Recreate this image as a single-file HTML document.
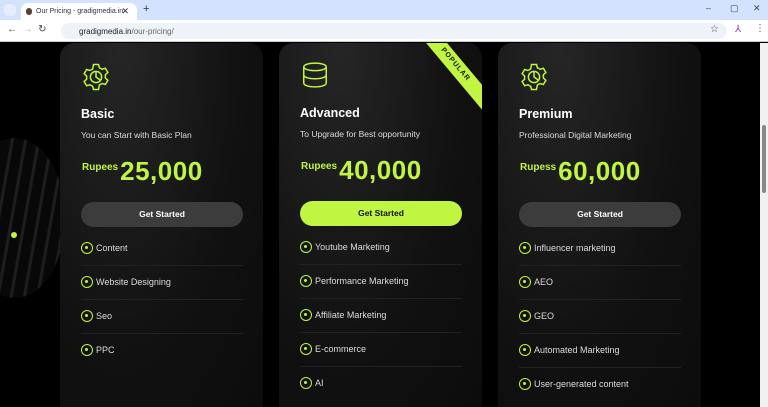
<!DOCTYPE html>
<html style="overflow:hidden;height:407px"><head><style>
*{margin:0;padding:0;box-sizing:border-box}
body{width:768px;height:407px;overflow:hidden;background:#000;font-family:"Liberation Sans",sans-serif;position:relative}
.tabbar{position:absolute;left:0;top:0;width:768px;height:20px;background:#d3e3fd}
.tab{position:absolute;left:21px;top:3px;width:116px;height:17px;background:#fff;border-radius:7px 7px 0 0;font-size:7px;color:#333;padding:5px 0 0 15px;white-space:nowrap}
.addr{position:absolute;left:0;top:20px;width:768px;height:22px;background:#fff;border-bottom:1px solid #ccc}
.url{position:absolute;left:61px;top:3px;width:666px;height:16px;background:#eef2f9;border-radius:8px;font-size:8px;color:#222;padding:4px 0 0 18px}
.card{position:absolute;top:43px;width:203px;height:364px;border-radius:14px 14px 0 0;background:radial-gradient(ellipse at 30% 0%,#262626,#111 60%,#0c0c0c);overflow:hidden}
.ic{position:absolute;left:21px;top:19px}
h3{position:absolute;left:21px;top:64px;color:#fff;font-size:12.5px;font-weight:bold}
.sub{position:absolute;left:21px;top:87px;color:#ddd;font-size:8.5px}
.price{position:absolute;left:22px;top:113px;color:#c0f542;font-weight:bold;white-space:nowrap}
.price small{font-size:10px;vertical-align:10px;margin-right:2px}
.price span{font-size:26px;letter-spacing:0.5px}
.btn{position:absolute;left:21px;top:159px;width:162px;height:25px;border-radius:13px;background:#3c3c3c;color:#fff;font-size:8.5px;font-weight:bold;text-align:center;line-height:25px}
.green{background:#c0f542;color:#111}
ul{position:absolute;left:21px;top:189px;width:162px;list-style:none}
li{height:34px;border-bottom:1px solid #222;color:#ddd;font-size:9px;padding-top:11px;position:relative;padding-left:15px}
li:before{content:"";position:absolute;left:0;top:10px;width:10px;height:10px;border:1.5px solid #c0f542;border-radius:50%}
li:after{content:"";position:absolute;left:3.5px;top:13.5px;width:3px;height:3px;background:#c0f542;border-radius:50%}
.rib{position:absolute;right:-28px;top:14px;width:110px;height:16px;background:#c0f542;transform:rotate(50deg);color:#111;font-size:7px;font-weight:bold;text-align:center;line-height:16px;letter-spacing:1px}
.wc{position:absolute;top:3px;font-size:9px;color:#444}
</style></head><body>
<div class="tabbar"><div style="position:absolute;left:4px;top:4px;width:12px;height:12px;background:#e6eefb;border-radius:4px"></div>
<div class="tab"><span style="position:absolute;left:5px;top:5px;width:6px;height:7px;background:#5a4030;border-radius:3px"></span>Our Pricing - gradigmedia.in<span style="position:absolute;right:8px;top:3px;font-size:9px">✕</span></div>
<div style="position:absolute;left:143px;top:3px;font-size:11px;color:#333">+</div>
<span class="wc" style="left:706px">–</span><span class="wc" style="left:730px">▢</span><span class="wc" style="left:753px">✕</span></div>
<div class="addr"><div style="position:absolute;left:7px;top:4px;font-size:10px;color:#444;white-space:nowrap">←&nbsp;&nbsp;<span style="color:#bbb">→</span>&nbsp;&nbsp;↻</div>
<div class="url">gradigmedia.in<span style="color:#666">/our-pricing/</span></div>
<div style="position:absolute;left:710px;top:4px;font-size:10px;color:#444">☆</div>
<div style="position:absolute;left:735px;top:4px;font-size:10px;color:#8a3fc0">⅄</div>
<div style="position:absolute;left:755px;top:3px;font-size:10px;color:#444">⋮</div></div>
<div style="position:absolute;left:760px;top:43px;width:8px;height:364px;background:#f1f1f1"><div style="position:absolute;left:2px;top:82px;width:4px;height:68px;background:#888;border-radius:2px"></div></div>
<div style="position:absolute;left:-35px;top:138px;width:100px;height:160px;border-radius:50%;background:repeating-linear-gradient(100deg,#080808 0 6px,#1e1e1e 7px 9px,#080808 10px 13px)"></div>
<div style="position:absolute;left:11px;top:232px;width:6px;height:6px;border-radius:50%;background:#c0f542"></div>

<div class="card" style="left:60px">
<svg class="ic" width="30" height="30" viewBox="0 0 24 24" fill="none" stroke="#c0f542" stroke-width="1.2"><path d="M10 2h4l.7 2.6 2.2 1.2 2.6-.8 2 3.4-2 1.8v2.6l2 1.8-2 3.4-2.6-.8-2.2 1.2L14 22h-4l-.7-2.6-2.2-1.2-2.6.8-2-3.4 2-1.8v-2.6l-2-1.8 2-3.4 2.6.8 2.2-1.2z"/><circle cx="12" cy="12" r="4.5"/><path d="M12 7.5V12l3.5 2.5"/></svg>
<h3>Basic</h3><div class="sub">You can Start with Basic Plan</div>
<div class="price"><small>Rupees</small><span>25,000</span></div>
<div class="btn">Get Started</div>
<ul><li>Content</li><li>Website Designing</li><li>Seo</li><li style="border:0">PPC</li></ul></div>

<div class="card" style="left:279px">
<svg class="ic" width="30" height="30" viewBox="0 0 24 24" fill="none" stroke="#c0f542" stroke-width="1.2" style="top:17px"><ellipse cx="12" cy="5.5" rx="9" ry="3"/><path d="M3 5.5v13c0 1.7 4 3 9 3s9-1.3 9-3v-13M3 12c0 1.7 4 3 9 3s9-1.3 9-3"/></svg>
<div class="rib">POPULAR</div>
<h3 style="top:63px">Advanced</h3><div class="sub" style="top:86px">To Upgrade for Best opportunity</div>
<div class="price" style="top:112px"><small>Rupees</small><span>40,000</span></div>
<div class="btn green" style="top:158px">Get Started</div>
<ul style="top:188px"><li>Youtube Marketing</li><li>Performance Marketing</li><li>Affiliate Marketing</li><li>E-commerce</li><li style="border:0">AI</li></ul></div>

<div class="card" style="left:498px">
<svg class="ic" width="30" height="30" viewBox="0 0 24 24" fill="none" stroke="#c0f542" stroke-width="1.2"><path d="M10 2h4l.7 2.6 2.2 1.2 2.6-.8 2 3.4-2 1.8v2.6l2 1.8-2 3.4-2.6-.8-2.2 1.2L14 22h-4l-.7-2.6-2.2-1.2-2.6.8-2-3.4 2-1.8v-2.6l-2-1.8 2-3.4 2.6.8 2.2-1.2z"/><circle cx="12" cy="12" r="4.5"/><path d="M12 7.5V12l3.5 2.5"/></svg>
<h3>Premium</h3><div class="sub">Professional Digital Marketing</div>
<div class="price"><small>Rupess</small><span>60,000</span></div>
<div class="btn">Get Started</div>
<ul><li>Influencer marketing</li><li>AEO</li><li>GEO</li><li>Automated Marketing</li><li style="border:0">User-generated content</li></ul></div>
</body></html>
